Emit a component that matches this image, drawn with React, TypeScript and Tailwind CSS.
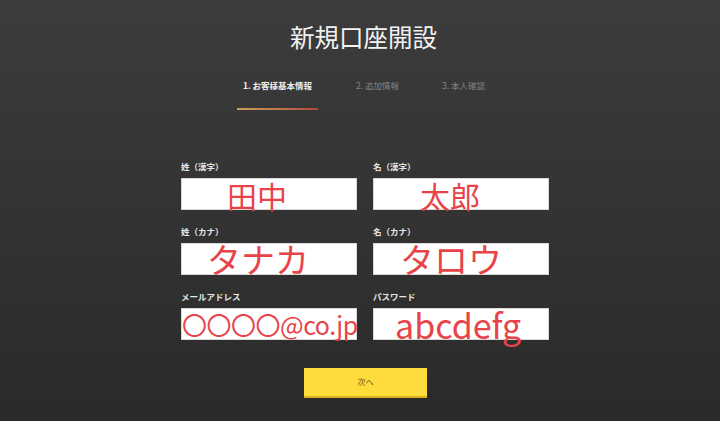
import React from "react";

const jp = { fontFamily: '"Noto Sans CJK JP", "Noto Sans", sans-serif' };

function Field({
  label,
  value,
  textClass,
}: {
  label: string;
  value: string;
  textClass: string;
}) {
  return (
    <div className="flex flex-col w-[176px]">
      <div className="h-[11px] leading-[11px] text-[8.5px] font-bold text-[#e6e6e6] whitespace-nowrap">
        {label}
      </div>
      <div className="mt-[6px] h-[32px] bg-white border border-[#d8d8d8] flex items-center overflow-visible">
        <span className={"leading-none whitespace-nowrap font-normal text-[#e9434a] " + textClass}>
          {value}
        </span>
      </div>
    </div>
  );
}

export default function App() {
  return (
    <div
      style={jp}
      className="w-[720px] h-[421px] overflow-hidden bg-gradient-to-b from-[#3c3c3c] to-[#2a2a2a] flex flex-col"
    >
      <div className="pt-[22px] pl-[290px] h-[52px] text-[24.5px] leading-[30px] text-[#f2f2f2]">
        新規口座開設
      </div>
      <div className="mt-[27px] pl-[237px] flex items-start">
        <div className="w-[81px] flex flex-col items-center">
          <div className="text-[8.5px] leading-[12px] font-bold text-[#f0f0f0] whitespace-nowrap">
            1. お客様基本情報
          </div>
          <div className="mt-[17px] h-[2px] w-full bg-gradient-to-r from-[#c9a15a] to-[#b2463e]" />
        </div>
        <div className="ml-[38px] text-[8.5px] leading-[12px] text-[#828282] whitespace-nowrap">
          2. 追加情報
        </div>
        <div className="ml-[43px] text-[8.5px] leading-[12px] text-[#828282] whitespace-nowrap">
          3. 本人確認
        </div>
      </div>
      <div className="mt-[51px] pl-[181px] flex flex-col gap-[16px]">
        <div className="flex gap-[16px]">
          <Field label="姓（漢字）" value="田中" textClass="pl-[45px] text-[30px] translate-y-[1px]" />
          <Field label="名（漢字）" value="太郎" textClass="pl-[46px] text-[30px] translate-y-[1px]" />
        </div>
        <div className="flex gap-[16px]">
          <Field label="姓（カナ）" value="タナカ" textClass="pl-[25px] text-[34px]" />
          <Field label="名（カナ）" value="タロウ" textClass="pl-[26px] text-[34px]" />
        </div>
        <div className="flex gap-[16px]">
          <Field label="メールアドレス" value="〇〇〇〇@co.jp" textClass="pl-0 text-[25px] tracking-[-0.5px]" />
          <Field label="パスワード" value="abcdefg" textClass="pl-[21px] text-[34px] translate-y-[1px]" />
        </div>
      </div>
      <div className="mt-[28px] pl-[304px]">
        <button className="w-[123px] h-[30px] bg-[#fddc3c] border-b-2 border-[#d9b21e] text-[8px] text-[#6b5a20] flex items-center justify-center">
          次へ
        </button>
      </div>
    </div>
  );
}
